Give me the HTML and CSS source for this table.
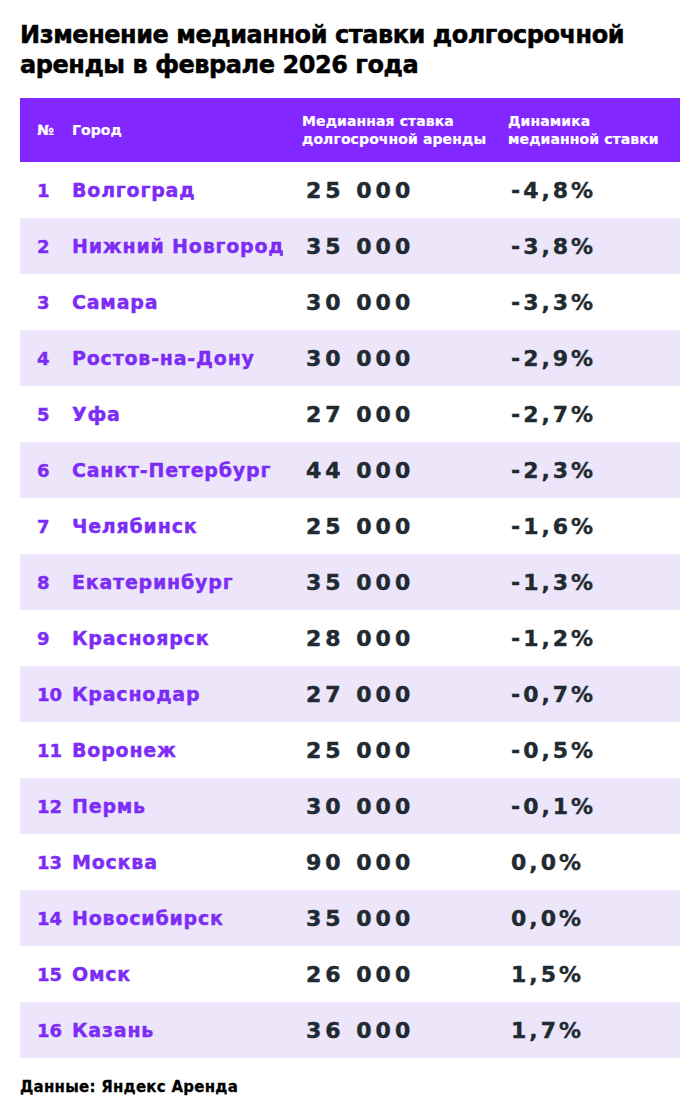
FILE: index.html
```html
<!DOCTYPE html>
<html lang="ru">
<head>
<meta charset="utf-8">
<link rel="stylesheet" href="styles.css">
</head>
<body>
<div class="page">
  <h1 class="title">Изменение медианной ставки долгосрочной аренды в феврале 2026 года</h1>
  <div class="table">
    <div class="head">
      <div class="c-num">№</div>
      <div class="c-city">Город</div>
      <div class="c-val">Медианная ставка<br>долгосрочной аренды</div>
      <div class="c-dyn">Динамика<br>медианной ставки</div>
    </div>
    <div class="row"><div class="c-num">1</div><div class="c-city">Волгоград</div><div class="c-val">25 000</div><div class="c-dyn">-4,8%</div></div>
    <div class="row"><div class="c-num">2</div><div class="c-city">Нижний Новгород</div><div class="c-val">35 000</div><div class="c-dyn">-3,8%</div></div>
    <div class="row"><div class="c-num">3</div><div class="c-city">Самара</div><div class="c-val">30 000</div><div class="c-dyn">-3,3%</div></div>
    <div class="row"><div class="c-num">4</div><div class="c-city">Ростов-на-Дону</div><div class="c-val">30 000</div><div class="c-dyn">-2,9%</div></div>
    <div class="row"><div class="c-num">5</div><div class="c-city">Уфа</div><div class="c-val">27 000</div><div class="c-dyn">-2,7%</div></div>
    <div class="row"><div class="c-num">6</div><div class="c-city">Санкт-Петербург</div><div class="c-val">44 000</div><div class="c-dyn">-2,3%</div></div>
    <div class="row"><div class="c-num">7</div><div class="c-city">Челябинск</div><div class="c-val">25 000</div><div class="c-dyn">-1,6%</div></div>
    <div class="row"><div class="c-num">8</div><div class="c-city">Екатеринбург</div><div class="c-val">35 000</div><div class="c-dyn">-1,3%</div></div>
    <div class="row"><div class="c-num">9</div><div class="c-city">Красноярск</div><div class="c-val">28 000</div><div class="c-dyn">-1,2%</div></div>
    <div class="row"><div class="c-num">10</div><div class="c-city">Краснодар</div><div class="c-val">27 000</div><div class="c-dyn">-0,7%</div></div>
    <div class="row"><div class="c-num">11</div><div class="c-city">Воронеж</div><div class="c-val">25 000</div><div class="c-dyn">-0,5%</div></div>
    <div class="row"><div class="c-num">12</div><div class="c-city">Пермь</div><div class="c-val">30 000</div><div class="c-dyn">-0,1%</div></div>
    <div class="row"><div class="c-num">13</div><div class="c-city">Москва</div><div class="c-val">90 000</div><div class="c-dyn">0,0%</div></div>
    <div class="row"><div class="c-num">14</div><div class="c-city">Новосибирск</div><div class="c-val">35 000</div><div class="c-dyn">0,0%</div></div>
    <div class="row"><div class="c-num">15</div><div class="c-city">Омск</div><div class="c-val">26 000</div><div class="c-dyn">1,5%</div></div>
    <div class="row"><div class="c-num">16</div><div class="c-city">Казань</div><div class="c-val">36 000</div><div class="c-dyn">1,7%</div></div>
  </div>
  <p class="source">Данные: Яндекс Аренда</p>
</div>
</body>
</html>
```
FILE: styles.css
```css
* { box-sizing: border-box; }
html, body { margin: 0; padding: 0; background: #ffffff; }
body { font-family: "DejaVu Sans", "Liberation Sans", sans-serif; font-weight: bold; }
.page { width: 700px; height: 1117px; padding: 20px 20px 0 20px; }
.title {
  margin: 0;
  font-size: 24px;
  line-height: 30px;
  color: #000;
  font-weight: bold;
  letter-spacing: -0.45px;
  -webkit-text-stroke: 0.5px #000;
  width: 640px;
}
.table { margin-top: 18px; width: 660px; }
.head, .row {
  display: grid;
  grid-template-columns: 52px 230px 206px 172px;
  align-items: center;
}
.head {
  background: #8227ff;
  height: 64px;
  color: #fff;
  font-size: 14px;
  line-height: 18px;
  letter-spacing: 0.1px;
  white-space: nowrap;
  -webkit-text-stroke: 0.2px #fff;
}
.head .c-num { padding-left: 17px; }
.row { height: 56px; }
.row:nth-child(odd) { background: #ede6fa; }
.row .c-num { padding-left: 17px; color: #7c2cf5; font-size: 18px; -webkit-text-stroke: 0.4px #7c2cf5; }
.row .c-city { color: #7c2cf5; font-size: 19px; letter-spacing: 0.8px; white-space: nowrap; -webkit-text-stroke: 0.4px #7c2cf5; }
.row .c-val { padding-left: 4px; color: #1f2b30; font-size: 22px; letter-spacing: 4px; -webkit-text-stroke: 0.5px #1f2b30; }
.row .c-dyn { padding-left: 3px; color: #1f2b30; font-size: 22px; letter-spacing: 3px; -webkit-text-stroke: 0.4px #1f2b30; }
.source {
  margin: 20px 0 0 0;
  font-size: 15px;
  letter-spacing: 0.25px;
  color: #000;
  -webkit-text-stroke: 0.3px #000;
}
```
